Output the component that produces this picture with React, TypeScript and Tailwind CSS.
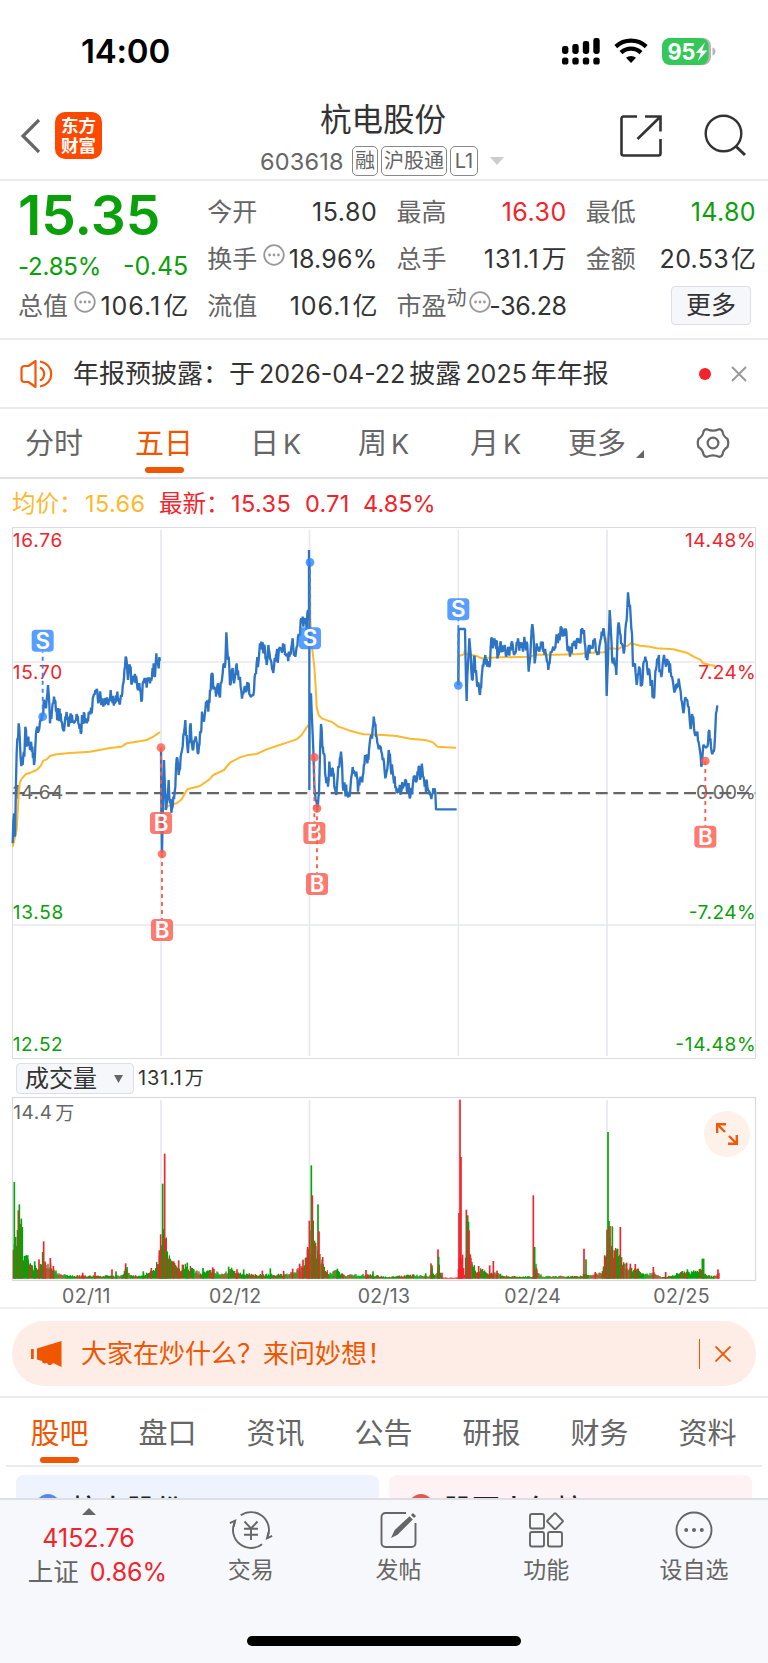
import type { ReactNode } from "react";

type Point = [number, number];

const RED = "#f4222a";
const GREEN = "#0aa00a";

// chart geometry is kept in 1/3 px units
const prices = [
  { dx: 0, d: "38,970 42,880 45,950 50,700 56,610 62,715 68,735 73,710 76,620 80,680 85,650 90,690 97,680 102,735 106,680 112,620 118,625 122,600 128,585 133,545 138,565 144,495 150,610 156,570 162,530 168,575 175,590 182,580 190,630 198,590 205,620 212,580 220,605 228,600 235,610 242,640 248,590 255,605 262,600 268,580 275,580 280,530 288,515 295,550 302,530 310,560 318,540 325,555 332,510 338,550 345,550 352,515 358,550 365,530 370,490 375,440 379,415 384,480 390,440 396,490 403,485 410,480 416,500 424,545 430,485 436,490 442,480 450,490 456,470 461,430 465,470 469,400 474,430 480,422" },
  { dx: 450, d: "33,683 34,880 36,1000 38,900 42,720 48,870 52,830 56,780 60,850 66,865 70,830 76,800 80,715 86,765 92,710 98,680 106,600 112,680 118,670 122,610 128,690 135,660 145,700 152,640 156,575 162,605 168,545 175,575 180,510 186,460 192,500 198,530 204,490 208,525 214,490 218,460 222,430 226,430 229,337 232,390 236,410 240,495 246,450 252,490 260,430 266,480 272,500 278,520 286,505 294,495 300,525 308,525 314,470 320,430 326,420 334,365 340,400 345,390 350,435 355,375 362,420 372,440 378,405 385,410 392,390 399,370 405,405 413,410 420,400 426,370 434,400 440,380 444,350 450,345 454,295 460,320 466,310 470,330 474,270 477,300 477,90" },
  { dx: 450, d: "478,140 478,810 479,560 483,520 487,620 490,690 493,800 497,840 502,870 507,820 510,700 513,612 517,680 522,700 527,770 534,800 538,725 544,770 548,745 553,800 559,825 563,770 568,740 573,695 578,790 585,810 592,815 598,830 604,770 610,755 615,760 619,755 624,815 630,780 635,770 640,760 645,705 652,730 657,690 662,650 668,625 673,603 678,650 684,675 692,680 698,720 704,755 710,755 716,690 722,740 730,770 738,800 746,805 753,815 760,800 767,780 774,800 781,830 788,800 793,770 799,785 806,740 812,770 817,745 824,800 832,800 840,825 848,820 854,805 858,868 920,868" },
  { dx: 1320, d: "55,495 56,327 75,327 80,543 84,430 88,355 92,400 96,480 102,410 108,450 113,500 120,525 125,470 130,440 136,405 142,440 150,435 154,355 160,380 167,360 174,405 180,375 188,395 194,375 202,400 210,380 218,375 224,400 232,370 240,370 247,380 255,370 262,375 266,455 271,410 275,327 279,327 284,430 290,370 298,395 303,365 310,395 317,400 325,450 332,395 340,380 348,360 355,360 362,320 368,350 374,325 381,370 390,410 397,370 404,375 412,355 420,370 427,325 432,330 436,380 441,420 450,375 458,385 466,370 474,395 480,370 485,335 492,333 497,370 500,528 504,420 509,270 513,340 518,430 524,435 529,465 534,320 540,340 545,370 551,400 556,330 560,300 564,217 568,260 572,290 576,340 579,440 585,430 590,495 597,440 604,495 610,430 616,410 622,450 628,450 634,490 641,535 648,450 655,415 660,450 666,460 672,405 678,440 684,435 692,455 698,480 705,510 712,490 718,490 724,540 732,570 738,540 744,560 750,610 758,590 764,640 772,635 778,680 784,740 788,700 796,680 802,680 808,630 813,680 821,695 825,650 828,580 832,556" },
];

const averages = [
  { dx: 0, d: "38,980 50,930 56,820 60,785 66,775 78,762 92,758 110,750 122,738 130,722 140,718 150,708 170,703 210,699 270,695 330,684 365,680 380,670 410,665 440,660 460,650 474,640 480,636" },
  { dx: 450, d: "33,690 35,780 38,870 60,855 80,850 95,838 112,808 150,798 178,778 190,765 222,750 240,728 270,712 290,706 320,702 350,688 380,678 410,668 440,658 455,645 468,625 477,612" },
  { dx: 450, d: "480,130 481,300 487,390 493,440 497,500 500,560 506,585 515,595 550,608 565,620 600,632 640,643 700,645 740,648 780,656 830,661 850,668 862,680 890,682 918,683" },
  { dx: 1320, d: "55,495 57,408 72,403 74,392 78,402 110,408 125,415 180,412 270,410 290,404 350,404 420,402 440,399 490,397 498,395 499,355 501,388 515,384 532,388 548,380 562,378 572,370 600,377 630,380 650,385 700,388 740,398 765,412 780,418 790,430 810,435 826,438" },
];

const markers = [
  { type: "S", x: 128, dot: 590, y: 362 },
  { type: "B", x: 483, dot: 683, y: 909 },
  { type: "B", x: 486, dot: 1002, y: 1230 },
  { type: "S", x: 930, dot: 127, y: 355 },
  { type: "B", x: 943, dot: 712, y: 939 },
  { type: "B", x: 951, dot: 865, y: 1092 },
  { type: "S", x: 1375, dot: 496, y: 268 },
  { type: "B", x: 2116, dot: 723, y: 950 },
];

const volumeBase: Point[] = [
  [38, 90], [44, 130], [62, 150], [68, 80], [80, 55], [95, 32], [110, 34], [130, 45], [150, 40], [160, 28], [175, 15], [200, 9], [340, 9], [365, 9], [376, 32], [390, 9], [420, 9], [450, 20], [470, 45], [483, 90], [491, 150], [500, 75], [510, 50], [530, 32], [560, 38], [580, 24], [600, 18], [640, 24], [670, 12], [690, 30], [710, 18], [740, 14], [780, 12], [850, 12], [880, 18], [905, 36], [925, 85], [935, 180], [942, 95], [955, 85], [965, 45], [985, 14], [1010, 24], [1030, 10], [1100, 12], [1130, 9], [1160, 5], [1240, 11], [1285, 8], [1295, 28], [1303, 10], [1316, 40], [1324, 3], [1370, 3], [1376, 60], [1386, 60], [1392, 10], [1398, 120], [1404, 160], [1408, 80], [1415, 50], [1425, 22], [1440, 32], [1460, 14], [1480, 22], [1500, 12], [1530, 7], [1598, 6], [1606, 50], [1612, 14], [1630, 7], [1700, 7], [1745, 8], [1754, 20], [1765, 10], [1780, 12], [1805, 20], [1818, 80], [1830, 110], [1845, 75], [1870, 45], [1890, 32], [1910, 28], [1930, 12], [1960, 16], [1980, 5], [2010, 8], [2040, 18], [2090, 22], [2105, 26], [2118, 10], [2140, 7], [2156, 16],
];

const volumeSpikes: [string, number, number][] = [
  ["g", 43, 290], ["g", 47, 125], ["r", 55, 205], ["g", 58, 223], ["g", 64, 180], ["g", 67, 155], ["g", 83, 70], ["g", 104, 52], ["r", 117, 58], ["g", 128, 80], ["r", 131, 112], ["r", 136, 48], ["r", 151, 62], ["r", 160, 38],
  ["r", 248, 18], ["r", 285, 20], ["r", 336, 28], ["g", 348, 22], ["r", 377, 46], ["g", 381, 35], ["g", 430, 22], ["r", 454, 32], ["r", 478, 85], ["r", 482, 133], ["g", 488, 285], ["r", 494, 375], ["r", 498, 120], ["g", 499, 85], ["r", 505, 60],
  ["r", 521, 52], ["r", 536, 55], ["g", 562, 48], ["g", 609, 32], ["r", 638, 34], ["g", 686, 36], ["r", 711, 28], ["g", 731, 28], ["r", 787, 24], ["g", 811, 31], ["r", 851, 23], ["r", 878, 30], ["r", 899, 45], ["r", 909, 57],
  ["r", 923, 95], ["r", 928, 174], ["g", 934, 340], ["r", 937, 250], ["r", 947, 98], ["g", 954, 223], ["r", 957, 142], ["r", 968, 65], ["g", 1012, 30], ["r", 1098, 26], ["g", 1119, 22], ["g", 1277, 16],
  ["r", 1293, 46], ["g", 1296, 40], ["r", 1314, 88], ["g", 1316, 66], ["r", 1326, 18], ["r", 1377, 197], ["r", 1380, 537], ["r", 1383, 365], ["r", 1386, 63], ["r", 1399, 207], ["g", 1403, 190], ["r", 1407, 145], ["r", 1411, 72],
  ["r", 1436, 38], ["r", 1469, 40], ["r", 1480, 53], ["r", 1491, 24], ["r", 1600, 250], ["g", 1604, 95], ["r", 1609, 33], ["r", 1752, 90], ["g", 1758, 58], ["r", 1786, 20], ["r", 1814, 70], ["r", 1821, 147], ["g", 1824, 440], ["g", 1827, 173], ["r", 1830, 158],
  ["g", 1837, 157], ["r", 1843, 85], ["g", 1853, 90], ["r", 1861, 155], ["r", 1880, 48], ["r", 1891, 45], ["r", 1906, 44], ["r", 1960, 35], ["r", 1997, 20], ["g", 2062, 28], ["g", 2107, 60], ["g", 2111, 60], ["r", 2154, 28],
];

function rand(n: number) {
  const v = Math.sin(n * 127.1 + 11.7) * 43758.5453;
  return v - Math.floor(v);
}

function jitter(d: string) {
  const pts = d.split(" ").map((p) => p.split(",").map(Number) as Point);
  const out: string[] = [];
  pts.forEach(([x, y], i) => {
    out.push(`${x},${y}`);
    const next = pts[i + 1];
    if (!next || (next[1] === y && next[0] - x > 15) || next[0] - x < 4) return;
    const steps = Math.max(2, Math.round((next[0] - x) / 1.9));
    for (let s = 1; s < steps; s++) {
      const t = s / steps;
      const amp = (rand(x + s * 3.3 + y) - 0.5) * 46;
      out.push(`${(x + (next[0] - x) * t).toFixed(1)},${(y + (next[1] - y) * t + amp).toFixed(1)}`);
    }
  });
  return out.join(" ");
}

function baseBars() {
  const bars: { x: number; h: number; red: boolean }[] = [];
  for (let i = 0; i < volumeBase.length - 1; i++) {
    const [x0, h0] = volumeBase[i];
    const [x1, h1] = volumeBase[i + 1];
    for (let x = x0; x < x1; x += 3) {
      const h = h0 + ((h1 - h0) * (x - x0)) / (x1 - x0);
      const quiet = x > 1324 && x < 1398;
      bars.push({ x, h: h * (0.65 + rand(x) * 0.6), red: quiet || rand(x * 2.7) > 0.7 });
    }
  }
  return bars;
}

function More({ className = "" }: { className?: string }) {
  return (
    <svg viewBox="0 0 22 22" className={`h-[22px] w-[22px] shrink-0 ${className}`}>
      <circle cx="11" cy="11" r="9.8" fill="none" stroke="#999" strokeWidth="1.8" />
      <circle cx="6.6" cy="11" r="1.4" fill="#999" /><circle cx="11" cy="11" r="1.4" fill="#999" /><circle cx="15.4" cy="11" r="1.4" fill="#999" />
    </svg>
  );
}

function Quote({ label, value, unit, className = "tracking-[0.6px] text-[#333]", extra }: { label: string; value: string; unit?: string; className?: string; extra?: ReactNode }) {
  return (
    <div className="flex h-[47px] items-center justify-between text-[25px] whitespace-nowrap">
      <span className="flex text-[#666]">{label}{extra}</span>
      <span className={`-mr-px ${className}`}>{value}{unit && <span className="ml-[2px] tracking-normal">{unit}</span>}</span>
    </div>
  );
}

function StatusBar() {
  return (
    <div className="flex h-[90px] items-start pt-[37px] pl-[81px]">
      <span className="-mt-px w-[480px] text-[33px] leading-[30px] font-semibold tracking-[-0.2px] text-black">14:00</span>
      <svg viewBox="0 0 156 30" className="h-[30px] w-[156px]">
        <g>
          <rect x="1" y="9" width="6.4" height="8" rx="2.4" /><rect x="11.3" y="7" width="6.4" height="10" rx="2.4" /><rect x="21.8" y="4" width="6.4" height="13" rx="2.4" /><rect x="32.3" y="1" width="6.4" height="16" rx="2.4" />
          <rect x="1" y="20.5" width="6.4" height="7" rx="2.6" /><rect x="11.3" y="20.5" width="6.4" height="7" rx="2.6" /><rect x="21.8" y="20.5" width="6.4" height="7" rx="2.6" /><rect x="32.3" y="20.5" width="6.4" height="7" rx="2.6" />
        </g>
        <g fill="none" stroke="#000" strokeWidth="4.2">
          <path d="M54.8 9.6a22.6 22.6 0 0 1 30.4 0" />
          <path d="M60 15.6a14.6 14.6 0 0 1 20 0" />
        </g>
        <path d="M65 20.8a7.6 7.6 0 0 1 10 0l-5 5.3z" />
        <path d="M106 1h36a8 8 0 0 1 8 8v11a8 8 0 0 1-8 8z" fill="#b5b5b5" />
        <rect x="101" y="1" width="46.5" height="27" rx="8" fill="#34c759" />
        <path d="M151.5 10.5c4 1 4 7 0 8z" fill="#b5b5b5" />
        <text x="106.5" y="22.8" fontSize="23.5" fontWeight="700" fill="#fff" textLength="28" lengthAdjust="spacingAndGlyphs">95</text>
        <path d="M144 5.5l-9.3 10.6h5.2l-3.2 8.2 9.6-10.8H141z" fill="#fff" />
      </svg>
    </div>
  );
}

function Header() {
  return (
    <header className="flex h-[91px] items-start border-b-2 border-[#ebebeb] pl-5">
      <svg viewBox="0 0 22 40" className="mt-[26px] h-10 w-[22px]"><path d="M19 4L3 20l16 16" fill="none" stroke="#666" strokeWidth="3.2" /></svg>
      <div className="mt-[22px] ml-[13px] flex h-[47px] w-[47px] flex-col items-center justify-center rounded-[10px] bg-[#ff4800] pt-px text-[17.5px] leading-[20px] font-bold text-white">
        <span>东方</span>
        <span>财富</span>
      </div>
      <div className="ml-[118px] w-[330px]">
        <h1 className="-ml-1 mt-[8px] text-center text-[31.5px] leading-[44px] text-[#333]">杭电股份</h1>
        <div className="mt-[2px] ml-[40px] flex h-[34px] items-center text-[22px] leading-[29px] text-[#666]">
          <span className="w-[92px] text-[23.5px] tracking-[0.2px]">603618</span>
          <span className="h-[30px] w-[26px] rounded-[5px] border-[1.5px] border-[#888] text-center text-[20px] leading-[28px]">融</span>
          <span className="ml-[3px] h-[30px] w-[66px] rounded-[5px] border-[1.5px] border-[#888] text-center text-[20px] leading-[28px]">沪股通</span>
          <span className="ml-[3px] h-[30px] w-[28px] rounded-[5px] border-[1.5px] border-[#888] text-center text-[20px] leading-[28px]">L1</span>
          <svg viewBox="0 0 14 8" className="ml-[12px] h-2 w-[14px]"><path d="M0 0h14L7 8z" fill="#ccc" /></svg>
        </div>
      </div>
      <svg viewBox="0 0 44 44" className="mt-[24px] ml-[69px] h-11 w-11 shrink-0" fill="none" stroke="#333" strokeWidth="2.6">
        <path d="M18 2.5H4.5a2 2 0 0 0-2 2v35a2 2 0 0 0 2 2h35a2 2 0 0 0 2-2V25" />
        <path d="M26 2.5h15.5V17.5M41 3L18.5 25" />
      </svg>
      <svg viewBox="0 0 44 44" className="mt-[24px] ml-[41px] h-11 w-11 shrink-0" fill="none" stroke="#333" strokeWidth="2.4">
        <circle cx="19.5" cy="19.5" r="17.8" /><path d="M31.5 32l9.5 9" strokeWidth="3" />
      </svg>
    </header>
  );
}

function Quotes() {
  return (
    <section className="grid h-[159px] grid-cols-4 gap-x-5 border-b-2 border-[#ebebeb] pt-[8px] pr-[13px] pl-[18px]">
      <div className="flex flex-col text-[#0aa00a]">
        <div className="mt-[3px] h-[47px] text-[55px] leading-[47px] font-semibold">15.35</div>
        <div className="mt-[13px] flex h-[29px] items-center justify-between text-[24px] whitespace-nowrap">
          <span className="tracking-[-0.2px]">-2.85%</span><span className="-mr-px text-[25px]">-0.45</span>
        </div>
        <div className="mt-[2px]"><Quote label="总值" value="106.1" unit="亿" className="tracking-[1px] text-[#333]" extra={<More className="mt-[3px] ml-[6px] -mr-3" />} /></div>
      </div>
      <div>
        <Quote label="今开" value="15.80" />
        <Quote label="换手" value="18.96%" className="tracking-[0.2px] text-[#333]" extra={<More className="mt-[3px] ml-[6px] -mr-3" />} />
        <Quote label="流值" value="106.1" unit="亿" className="tracking-[1px] text-[#333]" />
      </div>
      <div>
        <Quote label="最高" value="16.30" className="tracking-[0.5px] text-[#f4222a]" />
        <Quote label="总手" value="131.1" unit="万" className="tracking-[1px] text-[#333]" />
        <Quote label="市盈" value="-36.28" className="tracking-[-0.3px] text-[#333]" extra={<><span className="-mt-1 text-[20px] leading-7">动</span><More className="mt-[3px] ml-[2px] -mr-3" /></>} />
      </div>
      <div>
        <Quote label="最低" value="14.80" className="tracking-[0.4px] text-[#0aa00a]" />
        <Quote label="金额" value="20.53" unit="亿" className="tracking-[0.3px] text-[#333]" />
        <div className="mt-[3px] mr-1 ml-auto flex h-[39px] w-20 items-center justify-center rounded-[4px] border border-[#dcdfe6] bg-[#f5f7fa] text-[25px] text-[#333]">更多</div>
      </div>
    </section>
  );
}

function Notice() {
  return (
    <section className="flex h-[69px] items-center border-b-2 border-[#ebebeb] pl-5 text-[26px] text-[#333]">
      <svg viewBox="0 0 33 30" className="h-[30px] w-[33px]" fill="none" stroke="#f05a0a" strokeWidth="2.2" strokeLinejoin="round">
        <path d="M15.5 2v26l-7-5H4.500a3 3 0 0 1-3-3V10a3 3 0 0 1 3-3h4z" />
        <path d="M20 8.500c5.500 2.500 5.500 10.500 0 13M20 2.500c15 2.500 15 22.500 0 25" />
      </svg>
      <span className="ml-[20px] w-[561px] whitespace-nowrap">年报预披露：于<span className="mx-1 text-[25px]">2026-04-22</span>披露<span className="mx-1 text-[25px]">2025</span>年年报</span>
      <span className="ml-[65px] h-3 w-3 rounded-full bg-[#f4222a]" />
      <svg viewBox="0 0 16 16" className="ml-5 h-4 w-4"><path d="M1 1l14 14M15 1L1 15" stroke="#999" strokeWidth="2" /></svg>
    </section>
  );
}

function PeriodTabs() {
  return (
    <nav className="flex h-[70px] border-b-2 border-[#dfe0e6] pl-[25px] text-[29px] leading-[70px] whitespace-nowrap text-[#666]">
      <span className="w-[110px]">分时</span>
      <span className="flex w-[115px] flex-col text-[#f05500]">五日<i className="-mt-[12px] ml-[10px] h-[6px] w-[39px] rounded-[3px] bg-[#f05500]" /></span>
      <span className="w-[108px]">日<span className="ml-1 text-[27px]">K</span></span>
      <span className="w-[112px]">周<span className="ml-1 text-[27px]">K</span></span>
      <span className="w-[98px]">月<span className="ml-1 text-[27px]">K</span></span>
      <span>更多</span>
      <svg viewBox="0 0 8 8" className="mt-[41px] ml-[10px] h-2 w-2"><path d="M8 0v8H0z" fill="#666" /></svg>
      <svg viewBox="0 0 34 32" className="mt-[18px] ml-[52px] h-8 w-[34px]" fill="none" stroke="#666" strokeWidth="2.2" strokeLinejoin="round">
        <path d="M11 2.2Q17 5 23 2.2Q25.500 2.2 26.500 4.500Q27 9 31.500 12Q33 16 31.500 20Q27 23 26.500 27.500Q25.500 29.800 23 29.800Q17 27 11 29.800Q8.500 29.800 7.500 27.500Q7 23 2.500 20Q1 16 2.500 12Q7 9 7.500 4.500Q8.500 2.200 11 2.200z" />
        <circle cx="17" cy="16" r="5.4" />
      </svg>
    </nav>
  );
}

function AxisLabel({ x, y, width, end, fill, children }: { x: number; y: number; width: number; end?: boolean; fill: string; children: string }) {
  return <text x={x} y={y} fill={fill} fontSize="57" textLength={width} textAnchor={end ? "end" : "start"}>{children}</text>;
}

function PriceChart() {
  return (
    <svg viewBox="0 0 2304 1620" className="block h-[540px] w-[768px]">
      <g fill="none" stroke="#e6e9f0" strokeWidth="5">
        {[483, 928.5, 1375, 1821].map((x) => <path key={x} d={`M${x} 30V1608`} />)}
        <path d="M38 426H2266M38 1215H2266" />
      </g>
      <rect x="37.5" y="22.5" width="2229" height="1593" fill="none" stroke="#dcdde2" strokeWidth="3" />
      <AxisLabel x={38} y={80} width={149} fill={RED}>16.76</AxisLabel>
      <AxisLabel x={38} y={478} width={149} fill={RED}>15.70</AxisLabel>
      <AxisLabel x={38} y={838} width={152} fill="#666">14.64</AxisLabel>
      <AxisLabel x={38} y={1196} width={152} fill={GREEN}>13.58</AxisLabel>
      <AxisLabel x={38} y={1593} width={150} fill={GREEN}>12.52</AxisLabel>
      <path d="M38 819.5H2266" stroke="#666" strokeWidth="7" strokeDasharray="36 17" />
      {averages.map((a, i) => <polyline key={i} points={a.d} transform={`translate(${a.dx} 0)`} fill="none" stroke="#fdb92e" strokeWidth="6" strokeLinejoin="round" />)}
      {prices.map((p, i) => <polyline key={i} points={jitter(p.d)} transform={`translate(${p.dx} 0)`} fill="none" stroke="#2e74c4" strokeWidth="7" strokeLinejoin="bevel" />)}
      <AxisLabel x={2267} y={80} width={212} end fill={RED}>14.48%</AxisLabel>
      <AxisLabel x={2267} y={478} width={172} end fill={RED}>7.24%</AxisLabel>
      <AxisLabel x={2267} y={838} width={179} end fill="#666">0.00%</AxisLabel>
      <AxisLabel x={2267} y={1196} width={201} end fill={GREEN}>-7.24%</AxisLabel>
      <AxisLabel x={2267} y={1593} width={241} end fill={GREEN}>-14.48%</AxisLabel>
      {markers.map((m, i) => {
        const color = m.type === "S" ? "#2f86ff" : "#ff5a4a";
        return (
          <g key={i}>
            <path d={`M${m.x} ${m.dot}V${m.y + (m.y > m.dot ? -33 : 33)}`} stroke={color} strokeWidth="5.5" strokeDasharray="12 12" />
            <g opacity="0.8">
              <circle cx={m.x} cy={m.dot} r="13" fill={color} />
              <rect x={m.x - 33} y={m.y - 33} width="66" height="66" rx="12" fill={color} />
            </g>
            <text x={m.x} y={m.y + 24} textAnchor="middle" fontSize="67" fontWeight="600" fill="#fff">{m.type}</text>
          </g>
        );
      })}
    </svg>
  );
}

function VolumeChart() {
  return (
    <div className="relative h-[186px]">
      <svg viewBox="0 0 2304 558" className="block h-[186px] w-[768px]">
        <g fill="none" stroke="#e6e9f0" strokeWidth="5">
          {[483, 928.5, 1375, 1821].map((x) => <path key={x} d={`M${x} 12V550`} />)}
        </g>
        <rect x="37.5" y="4.5" width="2229" height="549" fill="none" stroke="#d9dade" strokeWidth="3.5" />
        {baseBars().map((b, i) => <rect key={i} x={b.x} y={548 - b.h} width="4" height={b.h} fill={b.red ? RED : GREEN} />)}
        {volumeSpikes.map(([c, x, h], i) => <rect key={i} x={x - 2.5} y={548 - h} width="5" height={h} fill={c === "r" ? RED : GREEN} />)}
        <AxisLabel x={40} y={69} width={116} fill="#666">14.4</AxisLabel>
        <text x="166" y="71" fill="#666" fontSize="57">万</text>
      </svg>
      <div className="absolute top-[15px] left-[704px] flex h-[46px] w-[46px] items-center justify-center rounded-full bg-[#fef1ea]">
        <svg viewBox="0 0 22 22" className="h-[22px] w-[22px]" fill="none" stroke="#f05a0a" strokeWidth="2.4"><path d="M10 1.2H1.200V10M1.500 1.500l7.500 7.500M12 20.800h8.800V12M20.500 20.500L13 13" /></svg>
      </div>
    </div>
  );
}

function Charts() {
  return (
    <section className="border-b-2 border-[#f0f0f0]">
      <div className="flex h-[41px] items-center pt-[8px] pl-3 text-[23.5px] whitespace-nowrap text-[#f4222a]">
        <span className="w-[73px] text-[#fdb92e]">均价：</span><span className="w-[74px] tracking-[0.4px] text-[#fdb92e]">15.66</span>
        <span className="w-[72px]">最新：</span><span className="w-[74px] tracking-[0.4px]">15.35</span><span className="w-[58px] tracking-[0.3px]">0.71</span><span>4.85%</span>
      </div>
      <PriceChart />
      <div className="flex h-[36px] items-start pt-[3px] pl-4 text-[20px] text-[#333]">
        <div className="flex h-[31px] w-[118px] items-center rounded-[4px] border border-[#dcdfe6] bg-[#f5f7fa] pl-2 text-[24px] leading-[29px]">
          成交量<svg viewBox="0 0 9 8" className="ml-[17px] h-2 w-[9px]"><path d="M0 0h9L4.500 8z" fill="#666" /></svg>
        </div>
        <span className="ml-[4px] leading-[31px] tracking-[0.8px]">131.1<span className="ml-[2px] text-[19px]">万</span></span>
      </div>
      <VolumeChart />
      <div className="grid h-[25px] grid-cols-5 px-3 text-center text-[19.5px] leading-[28px] tracking-[0.3px] text-[#666]">
        {["02/11", "02/12", "02/13", "02/24", "02/25"].map((d) => <span key={d}>{d}</span>)}
      </div>
    </section>
  );
}

function Banner() {
  return (
    <section className="h-[89px] border-b-2 border-[#ebebeb] px-3 pt-3">
      <div className="flex h-[65px] items-center rounded-[32px] bg-[#fdede6] pl-[19px] text-[26px] text-[#f05500]">
        <svg viewBox="0 0 32 26" className="h-[26px] w-8" fill="#f05500"><path d="M0 8h2.800v10H0zM6 7.500L30.500 0v26l-8.500-4c-2 3-5 2.500-6 0-2 1-5 .5-5-2L6 18.500z" /></svg>
        <span className="ml-[18px] w-[618px]">大家在炒什么？来问妙想！</span>
        <span className="h-[30px] w-px bg-[#f05500]" />
        <svg viewBox="0 0 16 16" className="ml-[15px] h-4 w-4"><path d="M.5.5l15 15M15.500.5l-15 15" stroke="#f05500" strokeWidth="1.8" /></svg>
      </div>
    </section>
  );
}

function InfoTabs() {
  return (
    <nav className="mx-[6px] flex h-[69px] border-b-2 border-[#ebebeb] text-[29px] leading-[72px] text-[#666]">
      {["股吧", "盘口", "资讯", "公告", "研报", "财务", "资料"].map((t, i) => (
        <span key={t} className={`-ml-px flex w-[109px] flex-col items-center ${i === 0 ? "text-[#f05500]" : ""}`}>
          {t}
          {i === 0 && <i className="-mt-[13px] h-[6px] w-[39px] rounded-[3px] bg-[#f05500]" />}
        </span>
      ))}
    </nav>
  );
}

function Cards() {
  return (
    <div className="flex h-[31px] gap-[10px] overflow-hidden px-4 pt-2 text-[28px] leading-[40px] font-medium text-[#222]">
      <div className="flex h-[90px] w-[363px] items-start rounded-[8px] bg-[#eef3fd] pt-[15px] pl-5">
        <span className="mt-[4px] h-6 w-6 rounded-full bg-[#5b86ee]" /><span className="ml-[11px]">杭电股份</span>
      </div>
      <div className="flex h-[90px] w-[363px] items-start rounded-[8px] bg-[#fef2f4] pt-[15px] pl-5">
        <span className="mt-[4px] h-6 w-6 rounded-full bg-[#e05a52]" /><span className="ml-[11px]">股票人气榜</span>
      </div>
    </div>
  );
}

function Action({ label, children }: { label: string; children: ReactNode }) {
  return (
    <div className="flex w-[147.7px] flex-col items-center">
      <svg viewBox="0 0 44 40" className="h-10 w-11" fill="none" stroke="#666" strokeWidth="1.9">{children}</svg>
      <span className="mt-[2px] text-[23px] leading-[36px] text-[#666]">{label}</span>
    </div>
  );
}

function BottomBar() {
  return (
    <footer className="flex h-[165px] flex-col border-t-2 border-[#dcdfe4] bg-[#f7f8fb]">
      <div className="flex h-[136px] pt-[10px]">
        <div className="-mt-[2px] flex w-[177px] flex-col items-center text-[25px] text-[#f4222a]">
          <svg viewBox="0 0 14 7" className="h-[7px] w-[14px]"><path d="M7 0l7 7H0z" fill="#666" /></svg>
          <span className="mt-[5px] leading-[36px]">4152.76</span>
          <span className="-mt-[2px] ml-[18px] leading-[36px] whitespace-nowrap"><span className="mr-[11px] text-[25.5px] text-[#666]">上证</span>0.86%</span>
        </div>
        <Action label="交易">
          <path d="M11.7 5.3A18 18 0 0 1 38.9 26.2M33.1 34.2A18 18 0 0 1 5.7 12.4" />
          <path d="M.8 13.2l5.400-2.500-1.500 6M43.200 25.800l-5.200 2.500 1.500-6" />
          <path d="M15.5 11.5l6.500 7 6.500-7M22 18.500V30M15 18.800h14M15 24.800h14" />
        </Action>
        <Action label="发帖">
          <path d="M29 3H8.500a4 4 0 0 0-4 4v26a4 4 0 0 0 4 4h26a4 4 0 0 0 4-4V13" />
          <path d="M16 26l2.500-5.500L32.500 7.500l2 2L20 24z" fill="#666" /><path d="M35.500 6.500l2-2" strokeWidth="4.5" />
        </Action>
        <Action label="功能">
          <rect x="6" y="4" width="14" height="14.5" rx="2" /><rect x="6" y="22" width="14" height="14.5" rx="2" /><rect x="24" y="22" width="14" height="14.5" rx="2" />
          <path d="M30.300 3.700l-6.800 6.800a1 1 0 0 0 0 1.400l6.800 6.800a1.200 1.200 0 0 0 1.600 0l6.600-6.800a1 1 0 0 0 0-1.400l-6.600-6.800a1.200 1.200 0 0 0-1.600 0z" />
        </Action>
        <Action label="设自选">
          <circle cx="22" cy="20" r="17.5" />
          <g fill="#666" stroke="none"><circle cx="14.2" cy="20" r="2" /><circle cx="22" cy="20" r="2" /><circle cx="29.8" cy="20" r="2" /></g>
        </Action>
      </div>
      <div className="ml-[247px] h-[10px] w-[274px] rounded-full bg-black" />
    </footer>
  );
}

export default function App() {
  return (
    <main lang="zh-CN" className="flex h-[1663px] w-[768px] flex-col overflow-hidden bg-white font-['Inter','Noto_Sans_CJK_SC',sans-serif]">
      <StatusBar />
      <Header />
      <Quotes />
      <Notice />
      <PeriodTabs />
      <Charts />
      <Banner />
      <InfoTabs />
      <Cards />
      <BottomBar />
    </main>
  );
}
